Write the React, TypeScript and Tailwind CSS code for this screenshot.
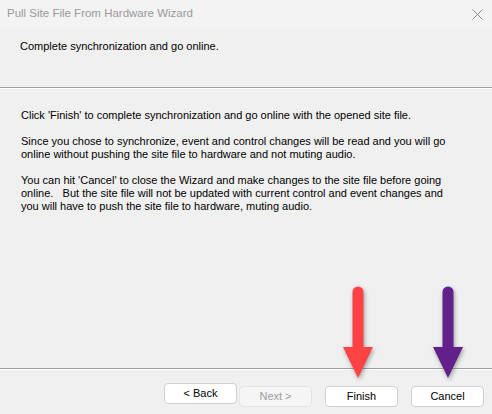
const Arrow = ({ x, top, color }: { x: number; top: number; color: string }) => {
    // shaft top at `top`, head base ~60px lower, tip ~90px lower
    const headTop = top + 60;
    const tip = top + 91;
    return (
        <svg
            className="absolute left-0 top-0 pointer-events-none"
            width={492}
            height={414}
            style={{ filter: "drop-shadow(1px 2px 2px rgba(0,0,0,0.35))" }}
        >
            <line x1={x} y1={top + 5} x2={x} y2={headTop + 2} stroke={color} strokeWidth={11} strokeLinecap="round" />
            <polygon points={`${x - 15},${headTop} ${x + 15},${headTop} ${x},${tip}`} fill={color} />
        </svg>
    );
};

const WizButton = ({ label, disabled }: { label: string; disabled?: boolean }) => (
    <button
        className={
            disabled
                ? "w-[73px] h-[21px] rounded-[4px] border border-[#e5e5e5] bg-[#f5f5f5] text-[#9d9d9d] text-[11px] leading-none"
                : "w-[73px] h-[21px] rounded-[4px] border border-[#d0d0d0] bg-white text-black text-[11px] leading-none"
        }
        style={{ fontFamily: "'Liberation Sans', Arial, sans-serif" }}
    >
        {label}
    </button>
);

export default function App() {
    return (
        <div className="relative w-[492px] h-[414px] overflow-hidden bg-[#f0f0f0] flex flex-col" style={{ fontFamily: "'Liberation Sans', Arial, sans-serif" }}>
            {/* title bar */}
            <div className="h-[28px] bg-[#f3f3f3] flex items-center justify-between pl-[7px] pr-[9px]">
                <span className="text-[11.5px] text-[#9a9a9a]">Pull Site File From Hardware Wizard</span>
                <svg width="11" height="11" viewBox="0 0 11 11">
                    <path d="M0.5 0.5 L10.5 10.5 M10.5 0.5 L0.5 10.5" stroke="#8a8a8a" strokeWidth="1" />
                </svg>
            </div>

            {/* header */}
            <div className="h-[59px] pl-[20px] pt-[10px]">
                <p className="text-[11px] text-black">Complete synchronization and go online.</p>
            </div>
            <div className="h-px bg-[#a0a0a0]" />
            <div className="h-px bg-white" />

            {/* body */}
            <div className="flex-1 pl-[21px] pt-[20px] text-[11px] leading-[13px] text-black flex flex-col gap-[13px]">
                <p>Click 'Finish' to complete synchronization and go online with the opened site file.</p>
                <p>
                    Since you chose to synchronize, event and control changes will be read and you will go
                    <br />
                    online without pushing the site file to hardware and not muting audio.
                </p>
                <p>
                    You can hit 'Cancel' to close the Wizard and make changes to the site file before going
                    <br />
                    online.&nbsp;&nbsp; But the site file will not be updated with current control and event changes and
                    <br />
                    you will have to push the site file to hardware, muting audio.
                </p>
            </div>

            {/* footer */}
            <div className="h-px bg-[#a0a0a0]" />
            <div className="h-px bg-white" />
            <div className="h-[44px] flex items-start pt-[13px] pl-[164px]">
                <WizButton label="< Back" />
                <div className="ml-[2px]">
                    <WizButton label="Next >" disabled />
                </div>
                <div className="ml-[13px]">
                    <WizButton label="Finish" />
                </div>
                <div className="ml-[13px]">
                    <WizButton label="Cancel" />
                </div>
            </div>

            <Arrow x={358} top={287} color="#ff4345" />
            <Arrow x={448} top={287} color="#62218a" />
        </div>
    );
}
